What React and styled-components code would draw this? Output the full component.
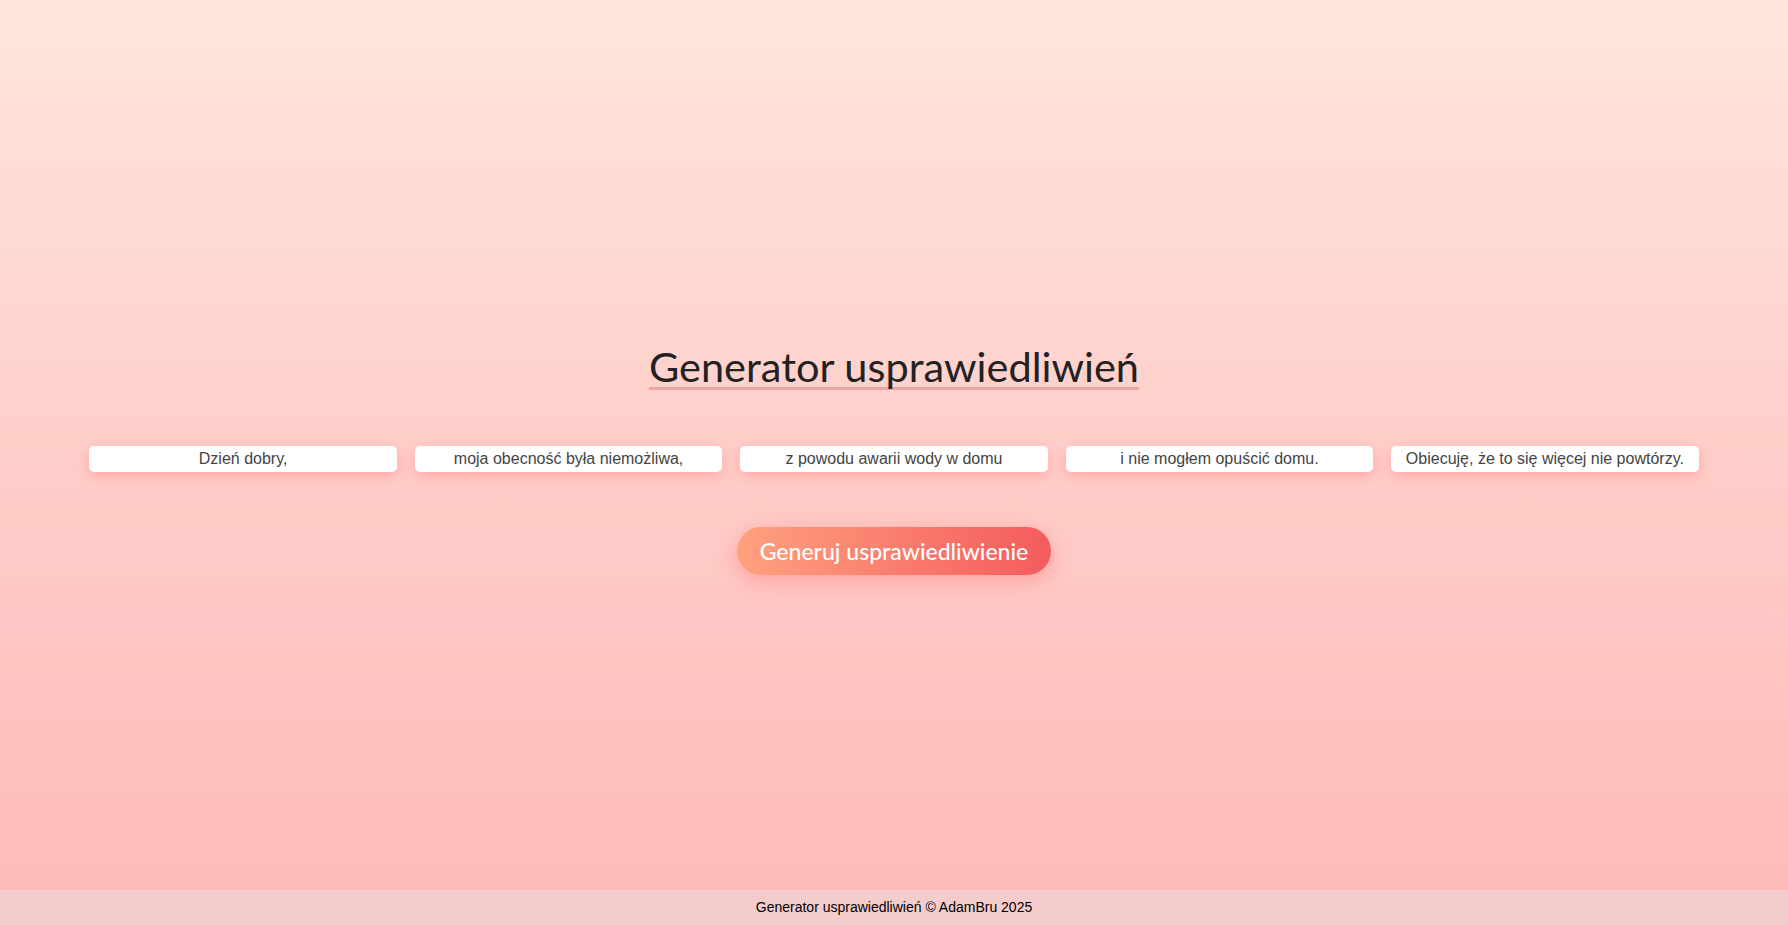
import React from 'react';
import styled, { createGlobalStyle } from 'styled-components';

const GlobalStyle = createGlobalStyle`
  html, body {
    margin: 0;
    padding: 0;
    height: 100%;
  }
  body {
    font-family: "Liberation Sans", Arial, sans-serif;
    background: linear-gradient(180deg, #ffe6dc 0%, #ffd0cb 45%, #feb9ba 100%);
  }
  #root {
    min-height: 100vh;
    display: flex;
    flex-direction: column;
  }
`;

const Main = styled.main`
  flex: 1;
  display: flex;
  flex-direction: column;
  align-items: center;
  justify-content: center;
  padding-top: 30px;
`;

const Title = styled.h1`
  display: inline-block;
  margin: 0 0 56px;
  padding: 0;
  font-family: "Lato", "DejaVu Sans", sans-serif;
  font-weight: 400;
  font-size: 41.5px;
  line-height: 42px;
  color: #222;
  border-bottom: 3px solid #f4a3a3;
`;

const Row = styled.div`
  width: 90%;
  display: flex;
  gap: 18px;
  margin-bottom: 55px;
`;

const Piece = styled.div`
  flex: 1;
  height: 26px;
  line-height: 26px;
  background: #fff;
  border-radius: 5px;
  text-align: center;
  font-size: 16px;
  color: #444;
  box-shadow: 0 4px 14px rgba(255, 110, 110, 0.4);
  white-space: nowrap;
`;

const Button = styled.button`
  height: 48px;
  padding: 0 23px;
  border: none;
  border-radius: 24px;
  background: linear-gradient(90deg, #ffa17f 0%, #f45b5d 100%);
  color: #fff;
  font-family: "Lato", "DejaVu Sans", sans-serif;
  font-size: 23px;
  font-weight: 500;
  box-shadow: 0 6px 22px rgba(255, 110, 110, 0.45);
  cursor: pointer;
`;

const Footer = styled.footer`
  height: 35px;
  line-height: 35px;
  background: #f5cccc;
  text-align: center;
  font-size: 14px;
  color: #000;
`;

const parts = [
  'Dzień dobry,',
  'moja obecność była niemożliwa,',
  'z powodu awarii wody w domu',
  'i nie mogłem opuścić domu.',
  'Obiecuję, że to się więcej nie powtórzy.',
];

export default function App() {
  return (
    <>
      <GlobalStyle />
      <Main>
        <Title>Generator usprawiedliwień</Title>
        <Row>
          {parts.map((p) => (
            <Piece key={p}>{p}</Piece>
          ))}
        </Row>
        <Button>Generuj usprawiedliwienie</Button>
      </Main>
      <Footer>Generator usprawiedliwień © AdamBru 2025</Footer>
    </>
  );
}
